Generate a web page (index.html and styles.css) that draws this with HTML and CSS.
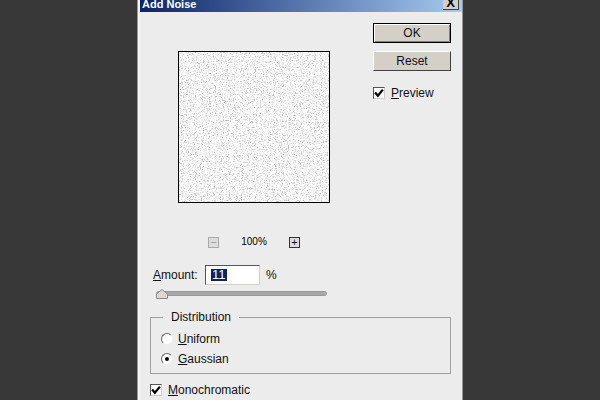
FILE: index.html
```html
<!DOCTYPE html>
<html>
<head>
<meta charset="utf-8">
<title>Add Noise</title>
<link rel="stylesheet" href="styles.css">
</head>
<body>
<div class="dialog">
  <div class="titlebar">
    <span class="title">Add Noise</span>
    <span class="close">X</span>
  </div>
  <div class="content">
    <div class="top">
      <div class="left">
        <div class="preview">
          <svg class="noise" width="150" height="150" xmlns="http://www.w3.org/2000/svg">
            <filter id="grain" x="0" y="0" width="100%" height="100%" color-interpolation-filters="sRGB">
              <feTurbulence type="fractalNoise" baseFrequency="0.85" numOctaves="3" seed="7"/>
              <feColorMatrix type="matrix" values="0 0 0 0 0.2  0 0 0 0 0.2  0 0 0 0 0.2  2.2 2.2 0 0 -2.2"/>
              <feGaussianBlur stdDeviation="0.4"/>
            </filter>
            <rect width="150" height="150" fill="#fbfbfb"/>
            <rect class="grain" width="150" height="150" filter="url(#grain)"/>
          </svg>
        </div>
        <div class="zoom">
          <span class="zoombtn off">&minus;</span>
          <span class="zoomval">100%</span>
          <span class="zoombtn">+</span>
        </div>
      </div>
      <div class="right">
        <div class="btn ok"><span>OK</span></div>
        <div class="btn reset">Reset</div>
        <label class="check preview-check"><span class="box"><svg width="10" height="10" viewBox="0 0 9 9"><path d="M1 4 L3.5 7 L8 1.5" fill="none" stroke="#000" stroke-width="2"/></svg></span><span><u>P</u>review</span></label>
      </div>
    </div>
    <div class="amount">
      <span class="lbl"><u>A</u>mount:</span>
      <span class="field"><span class="sel">11</span></span>
      <span class="pct">%</span>
    </div>
    <div class="slider"><span class="thumb"><svg width="12" height="10" viewBox="0 0 12 10"><path d="M.5 9.5V5L6 .5 11.5 5V9.5Z" fill="#dcd9d4" stroke="#8a8a8a"/></svg></span></div>
    <fieldset class="dist">
      <legend>Distribution</legend>
      <div class="radio"><span class="dot"></span><span><u>U</u>niform</span></div>
      <div class="radio"><span class="dot on"></span><span><u>G</u>aussian</span></div>
    </fieldset>
    <label class="check mono"><span class="box"><svg width="10" height="10" viewBox="0 0 9 9"><path d="M1 4 L3.5 7 L8 1.5" fill="none" stroke="#000" stroke-width="2"/></svg></span><span><u>M</u>onochromatic</span></label>
  </div>
</div>
</body>
</html>
```
FILE: styles.css
```css
* { box-sizing: border-box; }
html, body { margin: 0; height: 100%; overflow: hidden; }
body { background: #383838; color: #111; display: flex; justify-content: center; }
.dialog { width: 326px; height: 400px; background: #ececec; border-left: 1px solid #999; border-right: 1px solid #999; box-shadow: inset 2px 0 0 #f6f6f6; padding-left: 2px; display: flex; flex-direction: column; }
.titlebar { height: 12px; flex: none; background: linear-gradient(90deg, #0a246a, #a6caf0); display: flex; justify-content: space-between; align-items: flex-end; overflow: hidden; }
.title { font: bold 11px/14px "Liberation Sans", sans-serif; color: #fff; padding-left: 2px; margin-bottom: 1px; }
.close { width: 16px; height: 12px; margin: 0 3px 2px 0; background: #d4d0c8; border-right: 1px solid #404040; border-bottom: 1px solid #404040; font: bold 13px/9px "Liberation Sans", sans-serif; color: #000; text-align: center; }
.content { padding: 0 10px; font: 12px "Liberation Sans", sans-serif; flex: 1; }
.top { display: flex; }
.left { width: 223px; padding: 39px 0 0 28px; }
.preview { width: 152px; height: 152px; border: 1px solid #000; }
.noise { display: block; }
.grain { opacity: .38; }
.zoom { display: flex; align-items: center; margin: 34px 0 0 30px; }
.zoombtn { width: 11px; height: 11px; border: 1px solid #333; background: #ddd; font: 11px/9px "Liberation Sans", sans-serif; text-align: center; }
.zoombtn.off { border-color: #aaa; color: #999; }
.zoomval { width: 70px; text-align: center; font: 10px/10px "Liberation Sans", sans-serif; color: #000; margin-top: -1px; }
.right { padding-top: 11px; width: 78px; display: flex; flex-direction: column; }
.btn { width: 78px; height: 20px; background: #d4d0c8; text-align: center; line-height: 18px; border: 1px solid; border-color: #fff #404040 #404040 #fff; }
.btn.ok { outline: 1px solid #000; outline-offset: -1px; box-shadow: inset 1px 1px 0 #fff, inset -1px -1px 0 #808080; }
.reset { margin-top: 8px; }
.check { display: flex; align-items: center; gap: 6px; }
.preview-check { margin-top: 15px; }
.box { width: 12px; height: 12px; background: #fff; border: 1px solid; border-color: #555 #ccc #ccc #555; display: flex; align-items: center; justify-content: center; }
.amount { display: flex; align-items: center; margin-top: 17px; padding-left: 3px; }
.lbl { width: 52px; }
.field { width: 55px; height: 20px; background: #fff; border: 1px solid; border-color: #555 #d4d0c8 #d4d0c8 #555; padding: 3px 0 0 5px; line-height: 12px; }
.sel { background: #0a246a; color: #fff; display: inline-block; width: 16px; height: 12px; font-size: 13px; padding-left: 1px; }
.pct { margin-left: 6px; }
.slider { position: relative; margin: 6px 0 0 6px; width: 171px; height: 5px; background: #a8a8a8; border-radius: 3px; border: 1px solid #999; }
.thumb { position: absolute; left: -1px; top: -3px; line-height: 0; }
.dist { margin: 14px 0 0; padding: 5px 0 0 10px; height: 64px; width: 301px; border: 1px solid #a0a0a0; }
.dist legend { padding: 0 8px; margin-left: 2px; line-height: 14px; }
.radio { display: flex; align-items: center; gap: 5px; height: 20px; }
.dot { width: 12px; height: 12px; border-radius: 50%; background: #fff; border: 1px solid; border-color: #666 #eee #eee #666; display: flex; align-items: center; justify-content: center; }
.dot.on::after { content: ""; width: 4px; height: 4px; border-radius: 50%; background: #000; }
.mono { margin-top: 9px; }
```
